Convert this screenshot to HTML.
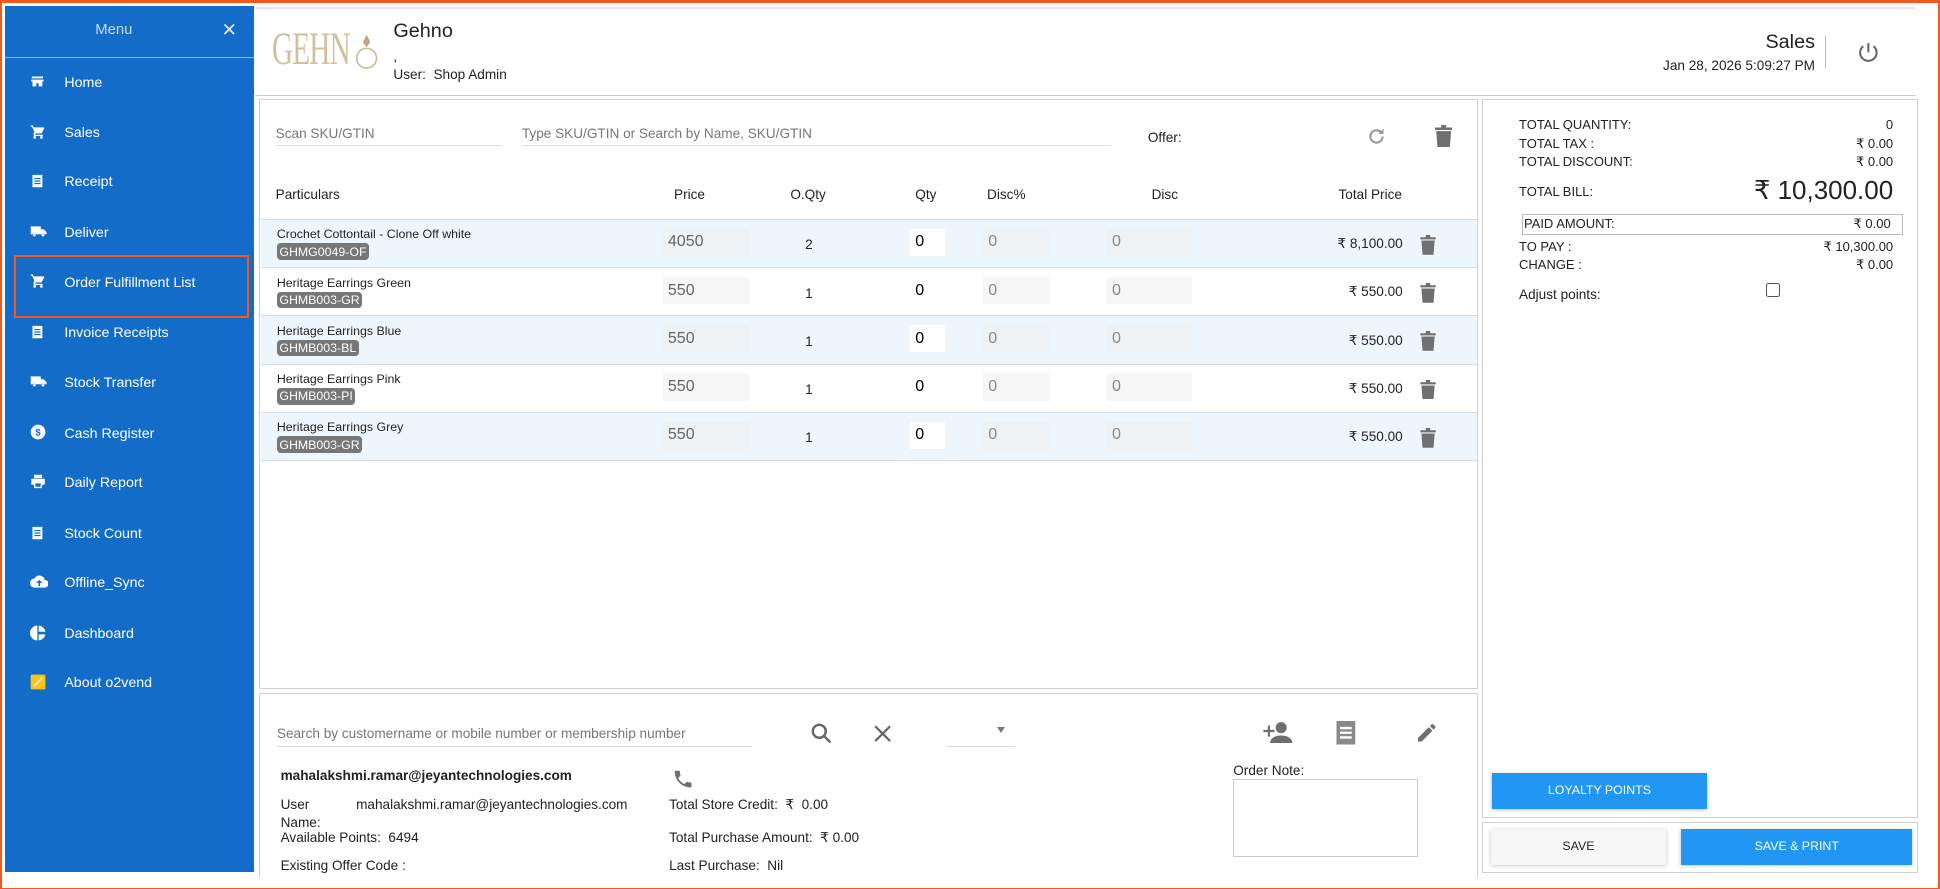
<!DOCTYPE html>
<html><head><meta charset="utf-8"><style>
*{margin:0;padding:0;box-sizing:border-box}
html,body{width:1940px;height:889px;overflow:hidden;background:#fff}
#w{zoom:1.2372;position:relative;width:1568px;height:719px;font-family:"Liberation Sans",sans-serif;color:#222;font-size:11px}
.a{position:absolute;white-space:nowrap}
.sb{position:absolute;left:4px;top:5px;width:201px;height:700px;background:#136cc7;color:#fff}
.mi{position:absolute;left:0;width:200px;height:16px;font-size:11.5px;color:#fff;white-space:nowrap}
.mi svg{position:absolute;left:20px;top:-1px}
.mi span{position:absolute;left:48px;top:0;white-space:nowrap}
.box{position:absolute;border:1px solid #d0d0d0;background:#fff}
.row{position:absolute;left:1px;width:983px;height:39px;border-bottom:1px solid #d6dde4}
.row.b{background:#eef6fd}
.nm{position:absolute;left:13px;top:6px;font-size:10px}
.bd{position:absolute;left:13px;top:19px;background:#777;color:#fff;font-size:10px;padding:1px 2px;border-radius:3px}
.in{position:absolute;top:7px;height:22px;font-size:13px;color:#666;padding:3px 4px}
.tr{position:absolute;right:60px;top:13px;font-size:11px}
.del{position:absolute;left:937px;top:12px}
.lb{font-size:10.5px}
</style></head><body><div id="w">
<div class="a" style="left:0;top:0;width:1568px;height:719px;border:2px solid #f4581f;border-top-width:3px"></div>
<div class="a" style="left:206px;top:6px;width:1342px;height:1px;background:#f6dce6"></div>

<div class="sb">
 <div class="a" style="left:73px;top:13px;font-size:12px;color:#c8d8ee">Menu</div>
 <div class="a" style="left:175px;top:10px;font-size:15px;color:#dfe8f5">✕</div>
 <div class="a" style="left:0;top:41px;width:201px;height:1px;background:#8fb2e0"></div>
 <div class="mi" style="top:56px"><svg width="12" height="12" viewBox="0 0 24 24" fill="#fff"><path d="M3 4h18v3H3zM2 9h20v3H2zM4 12h16v8h-6v-5h-4v5H4z"/></svg><span>Home</span></div>
 <div class="mi" style="top:96px"><svg width="13" height="13" viewBox="0 0 24 24" fill="#fff"><path d="M7 18a2 2 0 100 4 2 2 0 000-4zM1 2v2h2l3.6 7.6-1.4 2.4C5 16 6 18 7 18h12v-2H7.4l1.1-2h7.5c.8 0 1.4-.4 1.7-1l3.6-6.5A1 1 0 0020.4 5H5.2L4.3 2zm16 16a2 2 0 100 4 2 2 0 000-4z"/></svg><span>Sales</span></div>
 <div class="mi" style="top:136px"><svg width="12" height="13" viewBox="0 0 24 24" fill="#fff"><path d="M4 2h16v20H4zM7 7h10v2H7zm0 4h10v2H7zm0 4h10v2H7z" fill-rule="evenodd"/></svg><span>Receipt</span></div>
 <div class="mi" style="top:177px"><svg width="14" height="12" viewBox="0 0 24 20" fill="#fff"><path d="M1 3h14v11H1zM15 7h4l4 4v3h-8zM6 17a2 2 0 100-4 2 2 0 000 4zm12 0a2 2 0 100-4 2 2 0 000 4z"/></svg><span>Deliver</span></div>
 <div class="mi" style="top:217px"><svg width="13" height="13" viewBox="0 0 24 24" fill="#fff"><path d="M7 18a2 2 0 100 4 2 2 0 000-4zM1 2v2h2l3.6 7.6-1.4 2.4C5 16 6 18 7 18h12v-2H7.4l1.1-2h7.5c.8 0 1.4-.4 1.7-1l3.6-6.5A1 1 0 0020.4 5H5.2L4.3 2zm16 16a2 2 0 100 4 2 2 0 000-4z"/></svg><span>Order Fulfillment List</span></div>
 <div class="mi" style="top:258px"><svg width="12" height="13" viewBox="0 0 24 24" fill="#fff"><path d="M4 2h16v20H4zM7 7h10v2H7zm0 4h10v2H7zm0 4h10v2H7z" fill-rule="evenodd"/></svg><span>Invoice Receipts</span></div>
 <div class="mi" style="top:298px"><svg width="14" height="12" viewBox="0 0 24 20" fill="#fff"><path d="M1 3h14v11H1zM15 7h4l4 4v3h-8zM6 17a2 2 0 100-4 2 2 0 000 4zm12 0a2 2 0 100-4 2 2 0 000 4z"/></svg><span>Stock Transfer</span></div>
 <div class="mi" style="top:339px"><svg width="13" height="13" viewBox="0 0 24 24"><circle cx="12" cy="12" r="11" fill="#fff"/><text x="12" y="17" font-size="14" font-weight="bold" text-anchor="middle" fill="#136cc7" font-family="Liberation Sans">$</text></svg><span>Cash Register</span></div>
 <div class="mi" style="top:379px"><svg width="13" height="12" viewBox="0 0 24 22" fill="#fff"><path d="M6 1h12v5H6zM2 7h20v9h-4v5H6v-5H2zM8 14h8v5H8z" fill-rule="evenodd"/></svg><span>Daily Report</span></div>
 <div class="mi" style="top:420px"><svg width="12" height="13" viewBox="0 0 24 24" fill="#fff"><path d="M4 2h16v20H4zM7 7h10v2H7zm0 4h10v2H7zm0 4h10v2H7z" fill-rule="evenodd"/></svg><span>Stock Count</span></div>
 <div class="mi" style="top:460px"><svg width="15" height="12" viewBox="0 0 24 18" fill="#fff"><path d="M19 7A7 7 0 006 5 6 6 0 006 17h13a5 5 0 000-10zM12 7l4 4h-3v4h-2v-4H8z" fill-rule="evenodd"/></svg><span>Offline_Sync</span></div>
 <div class="mi" style="top:501px"><svg width="13" height="13" viewBox="0 0 24 24" fill="#fff"><path d="M11 1A11 11 0 0011 23zM13 1v9h10A11 11 0 0013 1zM13 14v9a11 11 0 0010-9z"/></svg><span>Dashboard</span></div>
 <div class="mi" style="top:541px"><svg width="13" height="13" viewBox="0 0 24 24"><rect x="1" y="1" width="22" height="22" rx="2" fill="#fcc419"/><path d="M6 18L18 6" stroke="#fff" stroke-width="2"/></svg><span>About o2vend</span></div>
</div>
<div class="a" style="left:11px;top:206px;width:190px;height:51px;border:2px solid #f4581f"></div>

<!-- header -->
<div class="a" style="left:220px;top:18px;font-family:'Liberation Serif',serif;font-size:38px;font-weight:normal;color:#cdb996;letter-spacing:-1px;transform:scaleX(0.62);transform-origin:left;-webkit-text-stroke:0;opacity:.9">GEHN</div>
<svg class="a" style="left:285px;top:25px" width="22" height="34" viewBox="0 0 22 34"><circle cx="11" cy="22" r="8" fill="none" stroke="#cdb996" stroke-width="1.3"/><path d="M8 9l3-6 3 6-3 4z" fill="#bda57e"/></svg>
<div class="a" style="left:318px;top:16px;font-size:16px;color:#222">Gehno</div>
<div class="a" style="left:318px;top:40px;font-size:11px">,</div>
<div class="a" style="left:318px;top:54px;font-size:11px">User:&nbsp; Shop Admin</div>
<div class="a" style="right:101px;top:25px;font-size:16px">Sales</div>
<div class="a" style="right:101px;top:47px;font-size:11px">Jan 28, 2026 5:09:27 PM</div>
<div class="a" style="left:1475px;top:29px;width:1px;height:26px;background:#bbb"></div>
<svg class="a" style="left:1500px;top:32px" width="20" height="20" viewBox="0 0 24 24" fill="none" stroke="#666" stroke-width="2"><path d="M12 3v9M7 6a8 8 0 1010 0"/></svg>
<div class="a" style="left:206px;top:77px;width:1343px;height:1px;background:#ccc"></div>

<!-- main table -->
<div class="box" style="left:209px;top:80px;width:986px;height:477px">
 <div class="a" style="left:13px;top:21px;font-size:11px;color:#777">Scan SKU/GTIN</div>
 <div class="a" style="left:13px;top:36px;width:183px;height:1px;background:#ddd"></div>
 <div class="a" style="left:212px;top:21px;font-size:11px;color:#777">Type SKU/GTIN or Search by Name, SKU/GTIN</div>
 <div class="a" style="left:212px;top:36px;width:476px;height:1px;background:#ddd"></div>
 <div class="a" style="left:718px;top:24px;font-size:11px">Offer:</div>
 <svg class="a" style="left:894px;top:21px" width="17" height="17" viewBox="0 0 24 24" fill="none" stroke="#999" stroke-width="2.4"><path d="M19 12a7 7 0 11-2-5"/><path d="M20 3l-0 6h-6z" fill="#999" stroke="none"/></svg>
 <svg class="a" style="left:950px;top:20px" width="14" height="18" viewBox="0 0 14 18" fill="#6f6f6f"><path d="M1 5h12l-1 13H2zM0 2h14v2H0zM5 0h4v2H5z"/></svg>
 <div class="a" style="left:13px;top:70px" >Particulars</div>
 <div class="a" style="left:335px;top:70px">Price</div>
 <div class="a" style="left:429px;top:70px">O.Qty</div>
 <div class="a" style="left:530px;top:70px">Qty</div>
 <div class="a" style="left:588px;top:70px">Disc%</div>
 <div class="a" style="left:721px;top:70px">Disc</div>
 <div class="a" style="right:61px;top:70px">Total Price</div>
 <div class="a" style="left:0;top:96px;width:984px;height:1px;background:#d6dde4"></div>

 <div class="row b" style="top:97px"><div class="nm">Crochet Cottontail - Clone Off white</div><div class="bd">GHMG0049-OF</div>
  <div class="in" style="left:325px;width:70px;background:#eef2f5">4050</div><div class="a" style="left:440px;top:14px;font-size:11px">2</div>
  <div class="in" style="left:525px;width:28px;background:#fff;color:#000">0</div><div class="in" style="left:584px;width:54px;background:#eef2f5;color:#888">0</div><div class="in" style="left:684px;width:69px;background:#eef2f5;color:#888">0</div>
  <div class="tr">₹ 8,100.00</div><svg class="del" width="13" height="16" viewBox="0 0 14 18" fill="#6f6f6f"><path d="M1 5h12l-1 13H2zM0 2h14v2H0zM5 0h4v2H5z"/></svg></div>
 <div class="row" style="top:136px"><div class="nm">Heritage Earrings Green</div><div class="bd">GHMB003-GR</div>
  <div class="in" style="left:325px;width:70px;background:#f6f6f6">550</div><div class="a" style="left:440px;top:14px;font-size:11px">1</div>
  <div class="in" style="left:525px;width:28px;color:#000">0</div><div class="in" style="left:584px;width:54px;background:#f6f6f6;color:#888">0</div><div class="in" style="left:684px;width:69px;background:#f6f6f6;color:#888">0</div>
  <div class="tr">₹ 550.00</div><svg class="del" width="13" height="16" viewBox="0 0 14 18" fill="#6f6f6f"><path d="M1 5h12l-1 13H2zM0 2h14v2H0zM5 0h4v2H5z"/></svg></div>
 <div class="row b" style="top:175px"><div class="nm">Heritage Earrings Blue</div><div class="bd">GHMB003-BL</div>
  <div class="in" style="left:325px;width:70px;background:#eef2f5">550</div><div class="a" style="left:440px;top:14px;font-size:11px">1</div>
  <div class="in" style="left:525px;width:28px;background:#fff;color:#000">0</div><div class="in" style="left:584px;width:54px;background:#eef2f5;color:#888">0</div><div class="in" style="left:684px;width:69px;background:#eef2f5;color:#888">0</div>
  <div class="tr">₹ 550.00</div><svg class="del" width="13" height="16" viewBox="0 0 14 18" fill="#6f6f6f"><path d="M1 5h12l-1 13H2zM0 2h14v2H0zM5 0h4v2H5z"/></svg></div>
 <div class="row" style="top:214px"><div class="nm">Heritage Earrings Pink</div><div class="bd">GHMB003-PI</div>
  <div class="in" style="left:325px;width:70px;background:#f6f6f6">550</div><div class="a" style="left:440px;top:14px;font-size:11px">1</div>
  <div class="in" style="left:525px;width:28px;color:#000">0</div><div class="in" style="left:584px;width:54px;background:#f6f6f6;color:#888">0</div><div class="in" style="left:684px;width:69px;background:#f6f6f6;color:#888">0</div>
  <div class="tr">₹ 550.00</div><svg class="del" width="13" height="16" viewBox="0 0 14 18" fill="#6f6f6f"><path d="M1 5h12l-1 13H2zM0 2h14v2H0zM5 0h4v2H5z"/></svg></div>
 <div class="row b" style="top:253px"><div class="nm">Heritage Earrings Grey</div><div class="bd">GHMB003-GR</div>
  <div class="in" style="left:325px;width:70px;background:#eef2f5">550</div><div class="a" style="left:440px;top:14px;font-size:11px">1</div>
  <div class="in" style="left:525px;width:28px;background:#fff;color:#000">0</div><div class="in" style="left:584px;width:54px;background:#eef2f5;color:#888">0</div><div class="in" style="left:684px;width:69px;background:#eef2f5;color:#888">0</div>
  <div class="tr">₹ 550.00</div><svg class="del" width="13" height="16" viewBox="0 0 14 18" fill="#6f6f6f"><path d="M1 5h12l-1 13H2zM0 2h14v2H0zM5 0h4v2H5z"/></svg></div>
</div>

<!-- customer panel -->
<div class="box" style="left:209px;top:560px;width:986px;height:150px;border-bottom:none">
 <div class="a" style="left:14px;top:26px;font-size:11px;color:#777">Search by customername or mobile number or membership number</div>
 <div class="a" style="left:14px;top:42px;width:384px;height:1px;background:#ddd"></div>
 <svg class="a" style="left:445px;top:23px" width="18" height="18" viewBox="0 0 24 24" fill="none" stroke="#666" stroke-width="2.6"><circle cx="10" cy="10" r="7"/><path d="M15 15l7 7"/></svg>
 <svg class="a" style="left:497px;top:25px" width="14" height="14" viewBox="0 0 14 14" stroke="#666" stroke-width="1.8"><path d="M1 1l12 12M13 1L1 13"/></svg>
 <div class="a" style="left:556px;top:42px;width:55px;height:1px;background:#ddd"></div>
 <div class="a" style="left:596px;top:27px;width:0;height:0;border:4px solid transparent;border-top:5px solid #777"></div>
 <svg class="a" style="left:811px;top:22px" width="24" height="18" viewBox="0 0 26 20" fill="#6f6f6f"><path d="M0 8h4V4h2v4h4v2H6v4H4v-4H0z"/><circle cx="16" cy="6" r="5"/><path d="M6 20c0-5 5-7 10-7s10 2 10 7z"/></svg>
 <svg class="a" style="left:870px;top:22px" width="16" height="19" viewBox="0 0 16 20" fill="#8a8a8a"><path d="M0 0h16v20H0zM3 5h10v2H3zm0 4h10v2H3zm0 4h10v2H3z" fill-rule="evenodd"/></svg>
 <svg class="a" style="left:934px;top:22px" width="19" height="19" viewBox="0 0 24 24" fill="#6f6f6f"><path d="M3 17.3V21h3.7L17.8 9.9l-3.7-3.7zM20.7 7a1 1 0 000-1.4l-2.3-2.3a1 1 0 00-1.4 0l-1.8 1.8 3.7 3.7z"/></svg>
 <div class="a" style="left:17px;top:60px;font-size:11px;font-weight:bold">mahalakshmi.ramar@jeyantechnologies.com</div>
 <svg class="a" style="left:333px;top:60px" width="18" height="18" viewBox="0 0 24 24" fill="#6f6f6f"><path d="M6.6 10.8a15 15 0 006.6 6.6l2.2-2.2c.3-.3.7-.4 1-.2 1.1.4 2.3.6 3.6.6.6 0 1 .4 1 1V20c0 .6-.4 1-1 1A17 17 0 013 4c0-.6.4-1 1-1h3.5c.6 0 1 .4 1 1 0 1.3.2 2.5.6 3.6.1.3 0 .7-.2 1z"/></svg>
 <div class="a" style="left:17px;top:83px">User</div>
 <div class="a" style="left:78px;top:83px">mahalakshmi.ramar@jeyantechnologies.com</div>
 <div class="a" style="left:17px;top:98px">Name:</div>
 <div class="a" style="left:17px;top:110px">Available Points:&nbsp; 6494</div>
 <div class="a" style="left:17px;top:133px">Existing Offer Code :</div>
 <div class="a" style="left:331px;top:83px">Total Store Credit:&nbsp; ₹&nbsp; 0.00</div>
 <div class="a" style="left:331px;top:110px">Total Purchase Amount:&nbsp; ₹ 0.00</div>
 <div class="a" style="left:331px;top:133px">Last Purchase:&nbsp; Nil</div>
 <div class="a" style="left:787px;top:56px">Order Note:</div>
 <div class="a" style="left:787px;top:69px;width:149px;height:63px;border:1px solid #ccc"></div>
</div>

<!-- right panel -->
<div class="box" style="left:1198px;top:80px;width:352px;height:581px">
 <div class="a lb" style="left:29px;top:14px">TOTAL QUANTITY:</div><div class="a lb" style="right:19px;top:14px">0</div>
 <div class="a lb" style="left:29px;top:29px">TOTAL TAX :</div><div class="a lb" style="right:19px;top:29px">₹ 0.00</div>
 <div class="a lb" style="left:29px;top:44px">TOTAL DISCOUNT:</div><div class="a lb" style="right:19px;top:44px">₹ 0.00</div>
 <div class="a lb" style="left:29px;top:68px">TOTAL BILL:</div><div class="a" style="right:19px;top:61px;font-size:21px">₹ 10,300.00</div>
 <div class="a" style="left:31px;top:92px;width:308px;height:17px;border:1px solid #bbb"></div>
 <div class="a lb" style="left:33px;top:94px">PAID AMOUNT:</div><div class="a lb" style="right:21px;top:94px">₹ 0.00</div>
 <div class="a lb" style="left:29px;top:112px">TO PAY :</div><div class="a lb" style="right:19px;top:112px">₹ 10,300.00</div>
 <div class="a lb" style="left:29px;top:127px">CHANGE :</div><div class="a lb" style="right:19px;top:127px">₹ 0.00</div>
 <div class="a" style="left:29px;top:151px;font-size:11px">Adjust points:</div>
 <div class="a" style="left:229px;top:148px;width:11px;height:11px;border:1px solid #555;border-radius:2px"></div>
 <div class="a" style="left:7px;top:544px;width:174px;height:29px;background:#2196f3;color:#fff;font-size:10px;text-align:center;line-height:29px;box-shadow:0 1px 3px rgba(0,0,0,.3)">LOYALTY POINTS</div>
</div>
<div class="box" style="left:1198px;top:664px;width:352px;height:42px">
 <div class="a" style="left:6px;top:5px;width:142px;height:29px;background:#f7f7f7;font-size:10px;text-align:center;line-height:29px;box-shadow:0 1px 3px rgba(0,0,0,.25)">SAVE</div>
 <div class="a" style="left:160px;top:5px;width:187px;height:29px;background:#2196f3;color:#fff;font-size:10px;text-align:center;line-height:29px;box-shadow:0 1px 3px rgba(0,0,0,.25)">SAVE &amp; PRINT</div>
</div>
</div></body></html>
